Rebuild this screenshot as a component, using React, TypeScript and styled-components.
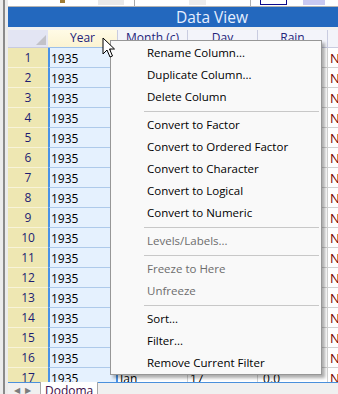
import React from "react";
import styled, { createGlobalStyle } from "styled-components";

const Global = createGlobalStyle`
  html, body { margin: 0; padding: 0; background: #f0f0f0; }
  body { font-family: "Open Sans", "Liberation Sans", sans-serif; }
`;

const Screen = styled.div`
  position: relative;
  width: 338px;
  height: 394px;
  overflow: hidden;
  display: flex;
  background: #f0f0f0;
`;

const LeftFrame = styled.div`
  width: 8px;
  flex: none;
  display: flex;
  background: #ececec;
`;

const FrameLine = styled.div`
  width: 2px;
  margin-left: 3px;
  background: #8a8a8a;
`;

const Main = styled.div`
  flex: 1;
  min-width: 0;
  display: flex;
  flex-direction: column;
`;

const TopStrip = styled.div`
  height: 6px;
  flex: none;
  background: #ffffff;
  border-bottom: 1px solid #b4b4b4;
  display: flex;
  align-items: flex-start;
`;

const ToolBit = styled.div<{ $ml: number; $w: number; $h: number; $bg: string; $bd?: string }>`
  margin-left: ${(p) => p.$ml}px;
  width: ${(p) => p.$w}px;
  height: ${(p) => p.$h}px;
  background: ${(p) => p.$bg};
  box-sizing: border-box;
  ${(p) => (p.$bd ? `border: 1px solid ${p.$bd}; border-top: none;` : "")}
  flex: none;
`;

const TitleBar = styled.div`
  height: 20px;
  flex: none;
  background: #2368be;
  color: #e6efff;
  font-size: 15.5px;
  line-height: 20px;
  padding-left: 168px;
  margin-bottom: 3px;
  white-space: nowrap;
`;

const GridArea = styled.div`
  height: 352px;
  flex: none;
  overflow: hidden;
  border-bottom: 1px solid #4a90dc;
  background: #ffffff;
`;

const HeaderRow = styled.div`
  height: 18px;
  display: flex;
  box-sizing: border-box;
`;

const Corner = styled.div`
  position: relative;
  width: 40px;
  flex: none;
  background: #e3e5f3;
  box-sizing: border-box;
  border-bottom: 1px solid #c8cbe0;
  &::after {
    content: "";
    position: absolute;
    right: 2px;
    bottom: 2px;
    width: 0;
    height: 0;
    border-left: 10px solid transparent;
    border-bottom: 10px solid #c2c2c8;
  }
`;

const HeadCell = styled.div<{ $sel?: boolean }>`
  width: 70px;
  flex: none;
  box-sizing: border-box;
  background: ${(p) => (p.$sel ? "linear-gradient(#fffbe6, #fbf3d2)" : "#f3f4fa")};
  border-right: 1px solid #c9cce0;
  border-bottom: 1px solid ${(p) => (p.$sel ? "#9cc0ea" : "#c9cce0")};
  color: #24247a;
  font-size: 12px;
  line-height: 16px;
  text-align: center;
  white-space: nowrap;
  overflow: hidden;
`;

const Row = styled.div`
  height: 20px;
  display: flex;
`;

const RowHead = styled.div`
  width: 40px;
  flex: none;
  box-sizing: border-box;
  background: #eee7b2;
  border-bottom: 1px solid #f8f3d8;
  color: #1c1c72;
  font-size: 12px;
  line-height: 19px;
  text-align: center;
`;

const Cell = styled.div<{ $kind: "year" | "plain" | "na" }>`
  width: 70px;
  flex: none;
  box-sizing: border-box;
  font-size: ${(p) => (p.$kind === "na" ? "13px" : "12px")};
  line-height: 21px;
  white-space: nowrap;
  overflow: hidden;
  ${(p) =>
    p.$kind === "year"
      ? `
    background: #e5f1fe;
    border-left: 2px solid #4a92e6;
    border-right: 2px solid #4a92e6;
    border-bottom: 1px solid #aecaea;
    color: #000;
    padding-left: 1px;
  `
      : `
    background: #ffffff;
    border-right: 1px solid #d2d2d2;
    border-bottom: 1px solid #d2d2d2;
    color: ${p.$kind === "na" ? "#7a0000" : "#000"};
    padding-left: 2px;
  `}
`;

const TabBar = styled.div`
  flex: 1;
  display: flex;
  align-items: flex-start;
  background: #f0f0f0;
`;

const TabArrows = styled.div`
  width: 32px;
  flex: none;
  box-sizing: border-box;
  padding-left: 6px;
  padding-top: 2px;
  display: flex;
  gap: 5px;
  color: #7c7c7c;
  font-size: 8px;
  line-height: 10px;
`;

const Tab = styled.div`
  margin-top: -1px;
  height: 14px;
  padding: 1px 4px 0 4px;
  background: #ffffff;
  border-left: 1px solid #a8a8a8;
  border-right: 1px solid #a8a8a8;
  color: #3a0c48;
  font-size: 12px;
  line-height: 15px;
`;

const Menu = styled.div`
  position: absolute;
  left: 110px;
  top: 40px;
  width: 212px;
  box-sizing: border-box;
  background: #f9f9f9;
  border: 1px solid #979797;
  box-shadow: 3px 3px 3px rgba(0, 0, 0, 0.32);
  padding: 1px 1px 0 1px;
  font-size: 11.5px;
`;

const Item = styled.div<{ $disabled?: boolean }>`
  height: 22px;
  line-height: 22px;
  padding-left: 35px;
  color: ${(p) => (p.$disabled ? "#6d6d6d" : "#000")};
  white-space: nowrap;
`;

const Sep = styled.div`
  height: 1px;
  margin: 3px 1px 2px 32px;
  background: #c8c8c8;
`;

const Cursor = styled.svg`
  position: absolute;
  left: 102px;
  top: 37px;
`;

const ROWS = Array.from({ length: 17 }, (_, i) => i + 1);

type MenuEntry = { label: string; disabled?: boolean } | "sep";
const MENU: MenuEntry[] = [
  { label: "Rename Column..." },
  { label: "Duplicate Column..." },
  { label: "Delete Column" },
  "sep",
  { label: "Convert to Factor" },
  { label: "Convert to Ordered Factor" },
  { label: "Convert to Character" },
  { label: "Convert to Logical" },
  { label: "Convert to Numeric" },
  "sep",
  { label: "Levels/Labels...", disabled: true },
  "sep",
  { label: "Freeze to Here", disabled: true },
  { label: "Unfreeze", disabled: true },
  "sep",
  { label: "Sort..." },
  { label: "Filter..." },
  { label: "Remove Current Filter" },
];

export default function App() {
  return (
    <Screen>
      <Global />
      <LeftFrame>
        <FrameLine />
      </LeftFrame>
      <Main>
        <TopStrip>
          <ToolBit $ml={52} $w={5} $h={3} $bg="#a07c34" />
          <ToolBit $ml={33} $w={26} $h={5} $bg="#e9e9e9" />
          <ToolBit $ml={10} $w={1} $h={6} $bg="#a8a8a8" />
          <ToolBit $ml={54} $w={17} $h={5} $bg="#ececec" />
          <ToolBit $ml={44} $w={1} $h={6} $bg="#b0b0b0" />
          <ToolBit $ml={9} $w={27} $h={5} $bg="#ffffff" $bd="#0a0a8c" />
          <ToolBit $ml={16} $w={22} $h={5} $bg="#c9c9f2" />
        </TopStrip>
        <TitleBar>Data View</TitleBar>
        <GridArea>
          <HeaderRow>
            <Corner />
            <HeadCell $sel>Year</HeadCell>
            <HeadCell>Month (c)</HeadCell>
            <HeadCell>Day</HeadCell>
            <HeadCell>Rain</HeadCell>
            <HeadCell />
          </HeaderRow>
          {ROWS.map((n) => (
            <Row key={n}>
              <RowHead>{n}</RowHead>
              <Cell $kind="year">1935</Cell>
              <Cell $kind="plain">Jan</Cell>
              <Cell $kind="plain">{n}</Cell>
              <Cell $kind="plain">&nbsp;0.0</Cell>
              <Cell $kind="na">N</Cell>
            </Row>
          ))}
        </GridArea>
        <TabBar>
          <TabArrows>
            <span>◀</span>
            <span>▶</span>
          </TabArrows>
          <Tab>Dodoma</Tab>
        </TabBar>
      </Main>
      <Menu>
        {MENU.map((m, i) =>
          m === "sep" ? (
            <Sep key={i} />
          ) : (
            <Item key={i} $disabled={m.disabled}>
              {m.label}
            </Item>
          )
        )}
      </Menu>
      <Cursor width="14" height="22" viewBox="0 0 14 22">
        <path
          d="M1 1 L1 17 L5 13 L8 20 L10.5 19 L7.5 12 L12.5 12 Z"
          fill="#ffffff"
          stroke="#000000"
          strokeWidth="1"
          strokeLinejoin="miter"
        />
      </Cursor>
    </Screen>
  );
}
